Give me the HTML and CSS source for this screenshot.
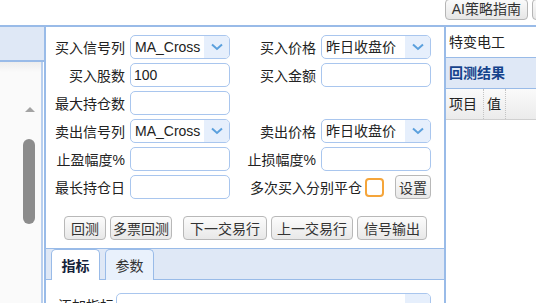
FILE: index.html
```html
<!DOCTYPE html>
<html lang="zh-CN">
<head>
    <meta charset="UTF-8">
    <meta name="viewport" content="width=device-width, initial-scale=1.0">
    <title>回测</title>
    <link rel="stylesheet" href="styles.css">
</head>
<body>
    <div class="topbar">
        <button class="tool-btn">AI策略指南</button>
        <button class="tool-btn cut"></button>
    </div>

    <div class="main">
        <aside class="left">
            <div class="left-head"></div>
            <div class="left-body">
                <div class="scrollbar">
                    <div class="arrow-up"></div>
                    <div class="thumb"></div>
                </div>
            </div>
        </aside>

        <section class="center">
            <div class="form">
                <label>买入信号列</label>
                <div class="select"><span class="select-text">MA_Cross</span><span class="select-arrow"><svg width="12" height="8" viewBox="0 0 12 8"><path d="M1 1.5L6 6l5-4.5" fill="none" stroke="#5ba0dd" stroke-width="2"/></svg></span></div>
                <label>买入价格</label>
                <div class="select"><span class="select-text">昨日收盘价</span><span class="select-arrow"><svg width="12" height="8" viewBox="0 0 12 8"><path d="M1 1.5L6 6l5-4.5" fill="none" stroke="#5ba0dd" stroke-width="2"/></svg></span></div>

                <label>买入股数</label>
                <input class="field" value="100">
                <label>买入金额</label>
                <input class="field">

                <label>最大持仓数</label>
                <input class="field">
                <span></span>
                <span></span>

                <label>卖出信号列</label>
                <div class="select"><span class="select-text">MA_Cross</span><span class="select-arrow"><svg width="12" height="8" viewBox="0 0 12 8"><path d="M1 1.5L6 6l5-4.5" fill="none" stroke="#5ba0dd" stroke-width="2"/></svg></span></div>
                <label>卖出价格</label>
                <div class="select"><span class="select-text">昨日收盘价</span><span class="select-arrow"><svg width="12" height="8" viewBox="0 0 12 8"><path d="M1 1.5L6 6l5-4.5" fill="none" stroke="#5ba0dd" stroke-width="2"/></svg></span></div>

                <label>止盈幅度%</label>
                <input class="field">
                <label>止损幅度%</label>
                <input class="field">

                <label>最长持仓日</label>
                <input class="field">
                <div class="mix">
                    <label>多次买入分别平仓</label>
                    <span class="check"></span>
                    <button class="btn small">设置</button>
                </div>
            </div>

            <div class="actions">
                <button class="btn">回测</button>
                <button class="btn tight">多票回测</button>
                <button class="btn spaced">下一交易行</button>
                <button class="btn slim">上一交易行</button>
                <button class="btn">信号输出</button>
            </div>

            <div class="tabbar">
                <div class="tab active">指标</div>
                <div class="tab">参数</div>
            </div>

            <div class="tab-body">
                <div class="add-row">
                    <label class="add-label">添加指标</label>
                    <div class="select wide"><span class="select-text"></span><span class="select-arrow"></span></div>
                </div>
            </div>
        </section>

        <aside class="right">
            <div class="stock">特变电工</div>
            <div class="result-head">回测结果</div>
            <div class="grid-head">
                <span class="col first">项目</span>
                <span class="col second">值</span>
            </div>
        </aside>
    </div>
</body>
</html>
```

FILE: styles.css
```css
body {
    margin: 0;
    width: 536px;
    height: 303px;
    overflow: hidden;
    background: #fff;
    color: #222;
    font-family: "Liberation Sans", Arial, "Noto Sans CJK SC", sans-serif;
    font-size: 14px;
}
button, input {
    font: inherit;
}
.topbar {
    height: 25px;
    border-bottom: 2px solid #99bbe8;
    display: flex;
    justify-content: flex-end;
    gap: 4px;
}
.tool-btn {
    height: 21px;
    margin-top: -1px;
    padding: 0 6px;
    border: 1px solid #b5b5b5;
    border-radius: 4px;
    background: linear-gradient(#fafafa, #e6e6e6);
    color: #333;
    line-height: 19px;
}
.tool-btn.cut {
    width: 20px;
    margin-right: -16px;
}
.main {
    display: flex;
    height: 276px;
}

/* left list panel */
.left {
    width: 44px;
    border-right: 2px solid #99bbe8;
    display: flex;
    flex-direction: column;
}
.left-head {
    height: 33px;
    background: #dfe8f6;
    border-bottom: 2px solid #99bbe8;
}
.left-body {
    flex: 1;
    width: 41px;
    border-right: 2px solid #b9cfee;
    background: linear-gradient(#ededed, #fafafa 10px);
}
.scrollbar {
    margin-left: 23px;
    padding-top: 45px;
}
.arrow-up {
    width: 0;
    margin-left: 2px;
    border-left: 5px solid transparent;
    border-right: 5px solid transparent;
    border-bottom: 5px solid #a3a3a3;
}
.thumb {
    width: 12px;
    height: 85px;
    margin-top: 27px;
    border-radius: 6px;
    background: #8c8c8c;
}

/* centre form */
.center {
    width: 398px;
    display: flex;
    flex-direction: column;
}
.form {
    display: grid;
    grid-template-columns: 74px 100px 81px 110px;
    grid-auto-rows: 24px;
    column-gap: 5px;
    row-gap: 4px;
    padding: 8px 0 0 5px;
    align-items: center;
}
.form label {
    text-align: right;
    white-space: nowrap;
}
.field, .select {
    box-sizing: border-box;
    height: 24px;
    border: 1px solid #a9c6ee;
    border-radius: 5px;
    background: #fff;
}
.field {
    width: 100%;
    padding: 0 3px;
    color: #222;
    outline: none;
}
.select {
    display: flex;
    overflow: hidden;
}
.select-text {
    flex: 1;
    padding-left: 4px;
    line-height: 22px;
    white-space: nowrap;
    overflow: hidden;
}
.select-arrow {
    width: 25px;
    background: #e6effc;
    display: flex;
    align-items: center;
    justify-content: center;
}
.mix {
    grid-column: 3 / 5;
    display: flex;
    align-items: center;
    justify-content: flex-end;
}
.check {
    box-sizing: border-box;
    width: 19px;
    height: 19px;
    margin-left: 3px;
    border: 2px solid #f5a53a;
    border-radius: 4px;
}
.btn {
    box-sizing: border-box;
    height: 24px;
    padding: 0 6px;
    border: 1px solid #b8b8b8;
    border-radius: 4px;
    background: linear-gradient(#fcfcfc, #e8e8e8);
    color: #333;
}
.btn.small {
    padding: 0 3px;
    margin-left: 11px;
}
.actions {
    display: flex;
    gap: 4px;
    margin: 17px 0 0 18px;
}
.btn.tight {
    padding: 0 2px;
}
.btn.spaced {
    margin-left: 7px;
}
.btn.slim {
    padding: 0 5px;
}

/* tabs */
.tabbar {
    margin-top: 8px;
    height: 33px;
    border-top: 1px solid #99bbe8;
    border-bottom: 1px solid #99bbe8;
    background: #dfe8f6;
    display: flex;
    align-items: flex-end;
    gap: 5px;
    padding-left: 5px;
}
.tab {
    box-sizing: border-box;
    width: 49px;
    height: 31px;
    margin-bottom: -1px;
    border: 1px solid #99bbe8;
    border-bottom: none;
    border-radius: 5px 5px 0 0;
    background: #e9f1fc;
    color: #333;
    display: flex;
    align-items: center;
    justify-content: center;
}
.tab.active {
    background: #fff;
    color: #15223a;
    font-weight: bold;
}
.tab-body {
    padding: 13px 12px 0 12px;
}
.add-row {
    display: flex;
    align-items: flex-start;
}
.add-label {
    width: 56px;
    margin-right: 2px;
    padding-top: 2px;
    white-space: nowrap;
}
.select.wide {
    width: 315px;
}

/* right result panel */
.right {
    width: 90px;
    border-left: 2px solid #99bbe8;
}
.stock {
    height: 30px;
    line-height: 30px;
    padding-left: 3px;
    border-bottom: 1px solid #99bbe8;
}
.result-head {
    height: 30px;
    line-height: 30px;
    padding-left: 3px;
    background: #dfe8f6;
    border-bottom: 1px solid #99bbe8;
    color: #15428b;
    font-weight: bold;
}
.grid-head {
    display: flex;
    height: 30px;
    background: linear-gradient(#fafafa, #ebebeb);
    border-bottom: 1px solid #d0d0d0;
}
.col {
    box-sizing: border-box;
    padding-left: 3px;
    line-height: 30px;
    border-right: 1px dotted #c4c4c4;
}
.col.first {
    width: 38px;
}
.col.second {
    width: 22px;
}
```
